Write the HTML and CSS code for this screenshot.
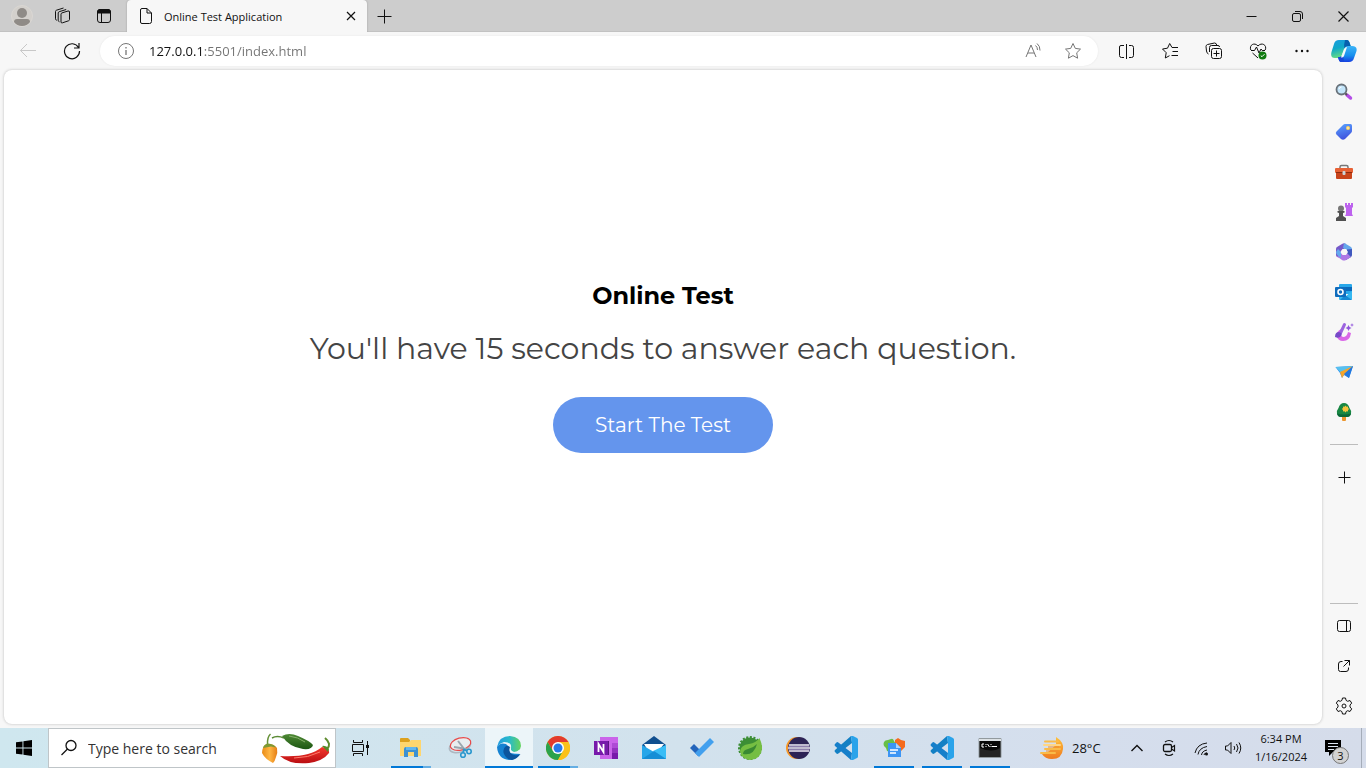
FILE: index.html
```html
<!DOCTYPE html>
<html lang="en">
<head>
<meta charset="utf-8">
<meta name="viewport" content="width=device-width, initial-scale=1">
<title>Online Test Application</title>
<link rel="stylesheet" href="styles.css">
</head>
<body>
<div class="desktop">
  <header class="tabstrip">
    <div class="tabstrip-tools">
      <button class="tool" aria-label="Profile"><svg width="22" height="22" viewBox="0 0 22 22"><circle cx="11" cy="11" r="10.500" fill="#d3d0cc" stroke="#dad7d3"/><circle cx="11" cy="8" r="5" fill="#8f8b87"/><path d="M3 17q0-3 3-3h10q3 0 3 3-3 4-8 4t-8-4z" fill="#8f8b87"/></svg></button>
      <button class="tool" aria-label="Workspaces"><svg class="line" width="18" height="18" viewBox="0 0 18 18"><path d="M7 7.200q0-1 1-1.300l6-1.900q1.500-.4 1.500 1v7.500q0 1-1 1.300l-6 2Q7 16.300 7 15zM5.500 14.800q-1.300-.3-1.300-1.500V6q0-1 1-1.300l7-2.200M2.800 13.300Q1.500 13 1.500 11.800V4.500q0-1 1-1.300L9.500 1"/></svg></button>
      <button class="tool" aria-label="Tab actions"><svg class="line" width="16" height="16" viewBox="0 0 16 16"><rect x="1.500" y="1.500" width="13" height="13" rx="2.500"/><path d="M1.500 5V4q0-2.500 2.500-2.500h8q2.500 0 2.500 2.500v1z" fill="#111"/><path d="M5.500 5v9"/></svg></button>
    </div>
    <div class="tab">
      <svg class="line" width="14" height="18" viewBox="0 0 14 18"><path d="M3 1.500h5l4.500 4.500v8.500q0 2-2 2H3q-1.500 0-1.500-1.500V3q0-1.500 1.500-1.500zM8 1.500V6h4.500"/></svg>
      <span class="tab-title">Online Test Application</span>
      <button class="tab-close" aria-label="Close tab"><svg class="line" width="10" height="10" viewBox="0 0 10 10"><path d="M1 1l8 8M9 1L1 9" stroke-width="1.200"/></svg></button>
    </div>
    <button class="new-tab" aria-label="New tab"><svg class="line" width="15" height="15" viewBox="0 0 15 15"><path d="M7.500 .5v14M.5 7.500h14"/></svg></button>
    <div class="window-controls">
      <button aria-label="Minimize"><svg class="line" width="11" height="11" viewBox="0 0 11 11"><path d="M.5 5.500h10"/></svg></button>
      <button aria-label="Restore"><svg class="line" width="11" height="11" viewBox="0 0 11 11"><rect x=".5" y="2.500" width="8" height="8" rx="1.500"/><path d="M3 .5h5q2.500 0 2.500 2.500v5"/></svg></button>
      <button aria-label="Close"><svg class="line" width="11" height="11" viewBox="0 0 11 11"><path d="M.5.5l10 10M10.500.5l-10 10" stroke-width="1.200"/></svg></button>
    </div>
  </header>

  <div class="browser">
    <div class="browser-main">
      <nav class="toolbar">
        <div class="nav-buttons">
          <button class="tool" aria-label="Back" disabled><svg class="line faded" width="18" height="16" viewBox="0 0 18 16"><path d="M17 7.500H1.500M8 1L1.500 7.500 8 14"/></svg></button>
          <button class="tool" aria-label="Refresh"><svg class="line refresh" width="18" height="18" viewBox="0 0 18 18"><path d="M15.500 5.500A7.500 7.500 0 1 0 16.500 9M16 1v5h-5"/></svg></button>
        </div>
        <div class="address">
          <button class="address-info" aria-label="View site information"><svg class="line gray" width="18" height="18" viewBox="0 0 18 18"><circle cx="9" cy="9" r="7.500"/><path d="M9 8v5M9 5v1.500" stroke-width="1.300"/></svg></button>
          <input class="url" type="text" aria-label="Address" value="127.0.0.1:5501/index.html">
          <button class="tool" aria-label="Read aloud"><svg class="line gray" width="18" height="18" viewBox="0 0 18 18"><path d="M2 15L7 3l5 12M4 11h6M11.500 3.500q2 1.500 2 4.500M13 1.500q3.200 2.500 3 7"/></svg></button>
          <button class="tool" aria-label="Add to favorites"><svg class="line gray" width="18" height="18" viewBox="0 0 18 18"><path d="M9 1.500l2.300 4.900 5.200.7-3.800 3.700.9 5.400L9 13.600l-4.600 2.600.9-5.400L1.500 7.100l5.200-.7z"/></svg></button>
        </div>
        <div class="toolbar-actions">
          <button class="tool" aria-label="Split screen"><svg class="line" width="17" height="17" viewBox="0 0 17 17"><path d="M6 2.500H3Q1.500 2.500 1.500 4v8.500q0 2 2 2H6M11 2.500h2.500Q15.500 2.500 15.500 4.500v8q0 2-2 2H11M8.500 1v15"/></svg></button>
          <button class="tool" aria-label="Favorites"><svg class="line" width="18" height="18" viewBox="0 0 18 18"><path d="M11 5.500L8.700 1.500 6.500 6.200l-5 .8 3.700 3.700-.9 5.300 4.200-2.300M11 5.500h6M11.500 9.500h5.500M10.500 13.500h6.500"/></svg></button>
          <button class="tool" aria-label="Collections"><svg class="line" width="18" height="18" viewBox="0 0 18 18"><rect x="6.500" y="6.500" width="10" height="10" rx="2"/><path d="M11.500 8.500v6M8.500 11.500h6M3.500 12Q1.500 11 1.500 9L1 4.500Q1 3 2.500 2.500L9.500 1q2 0 2.300 2.300M4.500 10V5.500q0-2 2-2H13q1.500 0 1.500 1.500"/></svg></button>
          <button class="tool" aria-label="Browser essentials"><svg class="line" width="18" height="18" viewBox="0 0 18 18"><path d="M1.800 8C-.2 3 5.500-.2 9 4c3.500-4.200 9.500-1 7.200 4M2 8.500h3.500L7.500 5l2.500 6 2-4 1.200 1.500H16M3.500 11L9 16"/><circle cx="13.500" cy="13.500" r="4" fill="#107c10" stroke="none"/><path d="M11.800 13.700l1.200 1 2.500-2.500" stroke="#fff"/></svg></button>
          <button class="tool" aria-label="Settings and more"><svg width="18" height="18" viewBox="0 0 18 18" fill="#111"><circle cx="3.500" cy="9" r="1.200"/><circle cx="9" cy="9" r="1.200"/><circle cx="14.500" cy="9" r="1.200"/></svg></button>
        </div>
      </nav>
      <main class="page">
        <h1 class="page-title">Online Test</h1>
        <p class="page-text">You'll have 15 seconds to answer each question.</p>
        <button class="start-test">Start The Test</button>
      </main>
    </div>

    <aside class="sidebar">
      <button class="side" aria-label="Copilot"><svg width="26" height="26" viewBox="0 0 26 26"><defs><linearGradient id="cp1" x2=".3" y2="1"><stop stop-color="#199be0"/><stop offset=".5" stop-color="#10a8c8"/><stop offset="1" stop-color="#66dd83"/></linearGradient><linearGradient id="cp2" x2="0" y2="1"><stop stop-color="#3db5f8"/><stop offset=".6" stop-color="#168eed"/><stop offset="1" stop-color="#173fe2"/></linearGradient></defs><path d="M8 1h8q2 0 3 4l1 3h-4q-2 0-3 3l-2 5q-1 3-3 3H4q-5 0-3.500-6L3 5q1-4 5-4z" fill="url(#cp1)"/><path d="M14 1h2q2 0 3 4l1 3h-4q-1.500 0-2.500 2-1-4 .5-9z" fill="#075fae"/><path d="M17 7h4q5.500 0 4.500 5L23 19q-1 4-5 4h-8q-2 0-3-5h2q2 0 3-3l2-6q.5-2 3-2z" fill="url(#cp2)"/><path d="M7 18h2q2 0 3-3l1 8h-3q-2 0-3-5z" fill="#1747d8"/><path d="M13 10q1-2 3-2l-3 9q-1 2-3 1.500z" fill="#f3fbfa"/></svg></button>
      <button class="side" aria-label="Search"><svg width="18" height="18" viewBox="0 0 18 18"><path d="M12 12l3.500 3" stroke="#b44de7" stroke-width="3.500" stroke-linecap="round"/><path d="M10 10l2 2" stroke="#555" stroke-width="2"/><circle cx="6.500" cy="6.500" r="5" fill="#c3e5fa" stroke="#69727a" stroke-width="1.800"/><path d="M4 6q.5-2 2.500-2" stroke="#fff" fill="none"/></svg></button>
      <button class="side" aria-label="Shopping"><svg width="18" height="18" viewBox="0 0 18 18"><defs><linearGradient id="tag" x2=".3" y2="1"><stop stop-color="#5ba5ff"/><stop offset="1" stop-color="#4055df"/></linearGradient></defs><path d="M10 1h5.500Q17 1 17 2.500V8q0 1-1 2l-6 6q-2 1.500-4 0l-4.500-4.500q-1.500-1.500 0-3L8 2q1-1 2-1z" fill="url(#tag)"/><circle cx="13" cy="5" r="2" fill="#ffd45b"/><circle cx="13" cy="5" r=".7" fill="#fff"/></svg></button>
      <button class="side" aria-label="Tools"><svg width="18" height="18" viewBox="0 0 18 18"><path d="M5 6V4q0-1.500 1.500-1.500h5Q13 2.500 13 4v2" fill="none" stroke="#777" stroke-width="1.500"/><rect y="5" width="18" height="5" rx="1" fill="#e76135"/><path d="M1 9h16v6q0 1-1 1H2q-1 0-1-1z" fill="#c8441b"/><path d="M1 9h16v1H1z" fill="#8d2b0c"/><rect x="7.500" y="8" width="3" height="4" rx="1" fill="#ccd4d9"/></svg></button>
      <button class="side" aria-label="Games"><svg width="18" height="18" viewBox="0 0 18 18"><path d="M10 0h2v2h1V0h2v2h1V0h2v4l-1 1v6l1 2h-8l1-2V5l-1-1z" fill="#bd62ee"/><circle cx="6" cy="5.500" r="3" fill="#777"/><path d="M2.500 8h7v1.500L8 10v3l3 2v3H1v-3l3-2v-3l-1.500-.5z" fill="#505050"/></svg></button>
      <button class="side" aria-label="Microsoft 365"><svg width="18" height="18" viewBox="0 0 18 18"><path d="M7 1L2 4Q1 4.600 1 6v6q0 1 1 2l4 1V8l5-3.500V1Q9-.5 7 1z" fill="#7659c9"/><path d="M9 .3q1 0 2 .6l5 3q1 .8 1 2.100v4l-6-3.500L8 5z" fill="#65a7ec"/><path d="M17 6v6q0 1-1 2l-5 3-2-4 3-3V6.500z" fill="#3f58be"/><path d="M1.500 13l5.500 4q2 1 4 0l5-3-4-4-3 2-3-2v3.500z" fill="#ad78e5"/><path d="M1 9q0 3 5 6V9L3 6z" fill="#63a8ed"/><path d="M7.500 6h3.500l2 3-2 3H7.500L5.500 9z" fill="#f7f7f7"/></svg></button>
      <button class="side" aria-label="Outlook"><svg width="18" height="18" viewBox="0 0 18 18"><path d="M5 1h11q1 0 1 1v9H4V2q0-1 1-1z" fill="#28a8ea"/><path d="M4 4h13v4H4z" fill="#0a6abc"/><path d="M4 9l7 4 6-5v8q0 1-1 1H5q-1 0-1-1z" fill="#35b8f1"/><path d="M10 12l7 5H5z" fill="#1689d4"/><rect y="4" width="11" height="10" rx="1" fill="#0f6cbd"/><circle cx="5.500" cy="9" r="2.500" fill="none" stroke="#fff" stroke-width="1.600"/></svg></button>
      <button class="side" aria-label="Designer"><svg width="20" height="20" viewBox="0 0 20 20"><path d="M7 7q-5 3-4.500 7Q4 19 9 19q7 0 8-8l-3-1q-1 5-5 5-3-1-2-8z" fill="#da67e8"/><path d="M10.500 2.500L6.500 11" stroke="#9c64df" stroke-width="3" stroke-linecap="round"/><path d="M1 15q0-5 4-5 4 1 2 4-2 3-6 1z" fill="#774ac8"/><path d="M14.500 3l1 2 2 1-2 1-1 2-1-2-2-1 2-1zM18 1l.5 1.500L20 3l-1.500.5L18 5l-.5-1.500L16 3l1.500-.5z" fill="#9154dc"/></svg></button>
      <button class="side" aria-label="Drop"><svg width="18" height="18" viewBox="0 0 18 18"><path d="M.5 4L18 3l-4 12-5-3-2 3-2-5z" fill="#2a8dee"/><path d="M.5 4L18 3 6 10z" fill="#57c1ef"/><path d="M5 9l13-6-9 9-2 3z" fill="#f5a52b"/><path d="M9 11l9-8-4 12z" fill="#2277de"/></svg></button>
      <button class="side" aria-label="Tree"><svg width="18" height="18" viewBox="0 0 18 18"><rect x="7" y="12" width="4" height="6" rx="1" fill="#ec962e"/><path d="M9 0q4 0 5.500 5Q17 8 16 11q-1 3-4 3H6q-3 0-4-3-1-3 1.500-6Q5 0 9 0z" fill="#188743"/><path d="M2 10.500q7 2 14 0-1 3.500-4 3.500H6q-3 0-4-3.500z" fill="#0b6839"/><path d="M10.500 2.500l1 1.200 1.500-.2v1.500l1.200 1-1.200 1v1.500l-1.500-.2-1 1.200-1-1.200-1.500.2V7L6.800 6 8 5V3.500l1.500.2z" fill="#f5c33b"/></svg></button>
      <hr class="side-rule">
      <button class="side" aria-label="Customize"><svg class="line" width="13" height="13" viewBox="0 0 13 13"><path d="M6.500.5v12M.5 6.500h12"/></svg></button>
      <div class="side-bottom">
        <hr class="side-rule">
        <button class="side" aria-label="Hide sidebar"><svg class="line" width="16" height="16" viewBox="0 0 16 16"><rect x="1.500" y="2.500" width="13" height="11" rx="2"/><path d="M10.500 2.500v11"/></svg></button>
        <button class="side" aria-label="Open in new window"><svg class="line" width="16" height="16" viewBox="0 0 16 16"><path d="M6.500 3.500H5q-2.500 0-2.500 2.500v5.500q0 2 2 2H10q2.500 0 2.500-2.500V9.500M8.500 2.500h5v5M13.500 2.500l-6 6"/></svg></button>
        <button class="side" aria-label="Settings"><svg class="line" width="18" height="18" viewBox="0 0 18 18"><path d="M7.500 1h3l.6 2.400 1.600.9L15 3.500l1.700 2.600L15 8v2l1.700 1.900-1.700 2.600-2.300-.8-1.600.9-.6 2.400h-3l-.6-2.400-1.600-.9-2.300.8-1.700-2.600L3 10V8L1.300 6.100 3 3.500l2.300.8 1.600-.9z" stroke-linejoin="round"/><circle cx="9" cy="9" r="2"/></svg></button>
      </div>
    </aside>
  </div>

  <footer class="taskbar">
    <button class="task" aria-label="Start"><svg width="16" height="16" viewBox="0 0 16 16" fill="#000"><path d="M0 2.300l6.500-.9v6.100H0zM7.400 1.300L16 0v7.500H7.400zM0 8.400h6.500v6.200L0 13.700zM7.400 8.400H16V16l-8.600-1.300z"/></svg></button>
    <label class="search">
      <svg class="line" width="18" height="18" viewBox="0 0 18 18"><circle cx="11" cy="6.500" r="5" stroke-width="1.300"/><path d="M7.500 10l-6 6" stroke-width="1.300"/></svg>
      <input type="text" aria-label="Search" placeholder="Type here to search">
      <svg width="70" height="36" viewBox="0 0 70 36"><defs><linearGradient id="red" x2="0" y2="1"><stop stop-color="#f5382c"/><stop offset="1" stop-color="#b90d12"/></linearGradient><linearGradient id="green" x2="0" y2="1"><stop stop-color="#4f8a35"/><stop offset="1" stop-color="#1c5612"/></linearGradient><linearGradient id="orange"><stop stop-color="#e98b16"/><stop offset=".5" stop-color="#ffb644"/><stop offset="1" stop-color="#e57d14"/></linearGradient></defs><path d="M5.500 15Q5 7 8.500 4" fill="none" stroke="#679238" stroke-width="1.500"/><path d="M1 18q1-4 6-4t8 4q1 5-1 9-1 4-3 6Q3 29 0 23q0-3 1-5z" fill="url(#orange)"/><path d="M1 18q1-4 5-4.500 6 .5 8 4l-5-1z" fill="#7c9a35"/><path d="M65 19q5-5-2-11" fill="none" stroke="#5d8b2d" stroke-width="2"/><path d="M18 26q17 1 28-2 8-2 14-7 8 1 7 6-6 8-20 10-19 2-29-7z" fill="url(#red)"/><path d="M32 28q14 0 26-6" fill="none" stroke="#ff7a6a" stroke-width="1"/><path d="M60 16q4-1 7 3l-1 3-3-3z" fill="#558a27"/><path d="M10 8q5-3 12 0" fill="none" stroke="#5b8b35" stroke-width="1.500"/><path d="M20 6q7-4 16 0 12 5 15 9-1 5-10 4-14-2-21-13z" fill="url(#green)"/><path d="M27 6q9 1 16 6" fill="none" stroke="#86b06a" stroke-width="1"/></svg>
    </label>
    <button class="task" aria-label="Task view"><svg class="line" width="18" height="18" viewBox="0 0 18 18"><path d="M2.500 1v2.500h9V1M2.500 17v-2.500h9V17M1.500 5.500h11v7h-11zM16.500 2v14"/><path d="M15 6h3v3h-3z" fill="#111" stroke="none"/></svg></button>
    <div class="apps">
      <button class="task running grouped" aria-label="File Explorer"><svg width="24" height="24" viewBox="0 0 24 24"><path d="M1 3q0-1 1-1h7l2 2v4H1z" fill="#dda11d"/><path d="M1 6h9l2-2h10v16H1z" fill="#ffd66e"/><path d="M5 13q0-2 2-2h10q2 0 2 2v8h-4v-5H9v5H5z" fill="#3d91d2"/><path d="M7 11h10v3H7z" fill="#63b6ec"/></svg></button>
      <button class="task" aria-label="Snipping Tool"><svg width="24" height="24" viewBox="0 0 24 24" fill="none"><ellipse cx="12" cy="10" rx="11" ry="6" transform="rotate(-18 12 10)" stroke="#aeb8c1" stroke-width="1.500"/><ellipse cx="12.500" cy="8" rx="10.500" ry="6" transform="rotate(-15 12.500 8)" stroke="#e84a4a" stroke-width="1.200" fill="#e9edef"/><path d="M10 5l7 9M6 11l13 2" stroke="#9ba6ae" stroke-width="2"/><circle cx="15" cy="19" r="2.300" stroke="#2997ce" stroke-width="1.600"/><circle cx="21" cy="15.500" r="2.200" stroke="#2997ce" stroke-width="1.600"/><path d="M15 16.500l1-3 3 1.500" stroke="#2997ce" stroke-width="1.800"/></svg></button>
      <button class="task running active" aria-label="Microsoft Edge"><svg width="26" height="26" viewBox="0 0 26 26"><defs><linearGradient id="edge" x2="1"><stop stop-color="#239be0"/><stop offset=".5" stop-color="#28b9cb"/><stop offset="1" stop-color="#65d45e"/></linearGradient></defs><path d="M1 12q3-5 9-3l4 4-2 5 12 1q-4 6-11 6Q2 24 1 12z" fill="#1683d2"/><path d="M1 12Q3 1 14 1q11 1 11 10-1 6-7 6-4-1-3-4 1-6-7-6-4 1-7 5z" fill="url(#edge)"/><path d="M10 11q-4 3-2 8 3 6 8 6 5-1 8.500-6-6 3-10-1-2-3 0-5-2-3-4.500-2z" fill="#0c559d"/><path d="M14 12q-2 4 3 6 4 1 7-1h2v-3l-3 1q-2 2-5 2-4-1-3-4z" fill="#ecf5f9"/></svg></button>
      <button class="task running grouped" aria-label="Google Chrome"><svg width="24" height="24" viewBox="0 0 24 24"><circle cx="12" cy="12" r="12" fill="#fbc11a"/><path d="M1.600 6A12 12 0 0 1 22.400 6H12L7 15z" fill="#e33b2e"/><path d="M1.600 6A12 12 0 0 0 12 24l5.200-9H7z" fill="#2ba24c"/><path d="M17 15l-5 9A12 12 0 0 0 22.400 6H12z" fill="#fbc11a"/><circle cx="12" cy="12" r="6" fill="#fff"/><circle cx="12" cy="12" r="4.500" fill="#2879ea"/></svg></button>
    </div>
    <div class="apps-more">
      <button class="task" aria-label="OneNote"><svg width="24" height="24" viewBox="0 0 24 24"><path d="M6 1h18v22H6z" fill="#ca64ea"/><path d="M18 7h6v5h-6z" fill="#ae4bd5"/><path d="M18 12h6v5h-6z" fill="#9332bf"/><path d="M18 17h6v6h-6z" fill="#7719aa"/><path d="M6 5h9v14H6z" fill="#5b1681"/><path d="M0 5h14v14H0z" fill="#7719aa"/><path d="M4.500 16V8l5 8V8" fill="none" stroke="#fff" stroke-width="1.800"/></svg></button>
      <button class="task" aria-label="Mail"><svg width="24" height="24" viewBox="0 0 24 24"><path d="M0 9L12 0l12 9v14H0z" fill="#104f8f"/><path d="M2 8h20l-4 5-6 4-7-4z" fill="#fff"/><path d="M0 9l12 7 12-7v14H0z" fill="#27a6e9"/><path d="M24 9v14L11 15z" fill="#39bdf6"/><path d="M0 23l12-8 12 8z" fill="#168ed6"/></svg></button>
      <button class="task" aria-label="To Do"><svg width="24" height="24" viewBox="0 0 24 24"><path d="M0 12l4-4 7 7-3 5z" fill="#2364bb"/><path d="M5 17L20 2l4 4L9 21z" fill="#42a0ee"/></svg></button>
      <button class="task" aria-label="Spring Tools"><svg width="24" height="24" viewBox="0 0 24 24"><circle cx="12" cy="12" r="10.500" fill="#3c8e35" stroke="#3c8e35" stroke-width="3" stroke-dasharray="2 1.500"/><path d="M21.500 2q3 7 2.500 11-1 10-12 11-9-1-10-9 1-6 9-7 7-1 10.500-6z" fill="#75be42"/><path d="M5 18q11 2 14-10-4 4-9 5-5 1-5 5z" fill="#398a32"/></svg></button>
      <button class="task" aria-label="Eclipse"><svg width="26" height="24" viewBox="0 0 26 24"><circle cx="12" cy="12" r="11" fill="#f79727"/><circle cx="14" cy="12" r="11" fill="#2d2355"/><path d="M4 9h20M3 12h22M4 15h20" stroke="#f1edf7" stroke-width="1.700"/><path d="M3.500 10.500h21M3.500 13.500h21" stroke="#8d7eac"/></svg></button>
      <button class="task" aria-label="Visual Studio Code"><svg width="24" height="24" viewBox="0 0 24 24"><path d="M17 0L1 14q-1 1 0 2l2 2q1 0 2-1L18 7z" fill="#1380c4"/><path d="M18 17L5 7Q4 6 3 6L1 8q-1 1 0 2l16 14z" fill="#167fca"/><path d="M17 0q1-.3 2 0l4 2q1 .5 1 1.500v17q0 1-1 1.500l-4 2q-1 .3-2 0l1-7V7z" fill="#2aa3ea"/></svg></button>
      <button class="task running" aria-label="Documents"><svg width="24" height="24" viewBox="0 0 24 24"><path d="M2 6q1-2 4-2l3-1q2-1 3 2l3 5-7 6-3-1-1-3-2-2q-1-2 0-4z" fill="#67bf47"/><path d="M13 4l3-2 3 2 4 1v6l-5 5-5-6z" fill="#f56b1d"/><path d="M6 7h8l5 5v9H6z" fill="#3c95f4"/><path d="M14 7l5 5h-5z" fill="#a9d4ff"/><path d="M8 14h8M8 17h6" stroke="#fff" stroke-width="1.500"/></svg></button>
      <button class="task running" aria-label="Visual Studio Code, open"><svg width="24" height="24" viewBox="0 0 24 24"><path d="M17 0L1 14q-1 1 0 2l2 2q1 0 2-1L18 7z" fill="#1380c4"/><path d="M18 17L5 7Q4 6 3 6L1 8q-1 1 0 2l16 14z" fill="#167fca"/><path d="M17 0q1-.3 2 0l4 2q1 .5 1 1.500v17q0 1-1 1.500l-4 2q-1 .3-2 0l1-7V7z" fill="#2aa3ea"/></svg></button>
      <button class="task running" aria-label="Command Prompt"><svg width="24" height="20" viewBox="0 0 24 20"><path d="M1 .5h22v19H1z" fill="#080808" stroke="#929a9e"/><path d="M1 1h22v2H1z" fill="#dce1e4"/><path d="M6 6H4v3h2M8 6v1M8 8v1M9.500 6l2 3M13 6v1M13 8v1M14 8.500h5" fill="none" stroke="#fff"/><path d="M2 10q12 5 20 0v9H2z" fill="#242424"/></svg></button>
    </div>
    <div class="tray">
      <button class="weather"><svg width="24" height="24" viewBox="0 0 24 24"><defs><linearGradient id="sun" x2="0" y2="1"><stop stop-color="#ffc13b"/><stop offset="1" stop-color="#ef7a20"/></linearGradient></defs><path d="M16 1q8 5 7 12-1 10-11 10-7 0-10-5l6-2 8-7z" fill="url(#sun)"/><path d="M5 5.500h13M5 13h15M1 17h14" stroke="#f9bb49" stroke-width="2" stroke-linecap="round"/><path d="M4 9h16" stroke="#ffd684" stroke-width="2" stroke-linecap="round"/><path d="M8 11h11M6 15h12" stroke="#ef9130"/></svg><span>28°C</span></button>
      <button class="tray-icon" aria-label="Show hidden icons"><svg class="line" width="14" height="8" viewBox="0 0 14 8"><path d="M1.500 7L7 1.500 12.500 7" stroke-width="1.400"/></svg></button>
      <button class="tray-icon" aria-label="Meet Now"><svg class="line" width="16" height="18" viewBox="0 0 16 18"><rect x="2.500" y="5.500" width="8" height="7" rx="1.500" stroke-width="1.300"/><path d="M10.500 8.500l3-2v5.500l-3-2M4 3q4-3 8 0M4 15q4 3 8 0" stroke-width="1.200"/></svg></button>
      <button class="tray-icon" aria-label="Network"><svg class="line" width="16" height="16" viewBox="0 0 16 16"><path d="M2 13Q4 4 14 3M5 14.500Q6 8 14 6.500M8.500 15q.5-4 5.500-5M11 15q0-2 3-2"/><circle cx="13.500" cy="14" r="1.500" fill="#111" stroke="none"/></svg></button>
      <button class="tray-icon" aria-label="Volume"><svg class="line" width="18" height="16" viewBox="0 0 18 16"><path d="M1.500 6h2L7 2.500v11L3.500 10h-2zM10 6q1.500 2 0 4M12.500 4q3 4 0 8M15 2.500q3.500 5.500 0 11"/></svg></button>
      <button class="clock"><span>6:34 PM</span><span>1/16/2024</span></button>
      <button class="notifications" aria-label="3 new notifications"><svg width="16" height="16" viewBox="0 0 16 16"><path d="M0 0h16v12h-8l-4 4v-4H0z"/><path d="M3 3.500h10M3 6.500h10M3 9.500h6" stroke="#dce4f0"/></svg><span class="badge">3</span></button>
      <button class="show-desktop" aria-label="Show desktop"></button>
    </div>
  </footer>
</div>
</body>
</html>
```
FILE: styles.css
```css
* { box-sizing: border-box; }

body {
  margin: 0;
  font-family: "Segoe UI", "Open Sans", "Noto Sans", sans-serif;
  font-size: 12px;
  color: #111;
}

button {
  display: flex;
  align-items: center;
  justify-content: center;
  padding: 0;
  border: 0;
  background: none;
  color: inherit;
  font: inherit;
}

svg { display: block; flex: none; }

.line { fill: none; stroke: #111; stroke-width: 1; }
.line.gray { stroke: #767676; }
.line.faded { stroke: #c8c8c8; }
.line.refresh { stroke-width: 1.2; }

.desktop {
  display: flex;
  flex-direction: column;
  min-height: 100vh;
  background: #f7f7f7;
}

/* Tab strip */
.tabstrip {
  display: flex;
  height: 32px;
  background: #cdcdcd;
  box-shadow: inset 0 -1px #c2c2c2;
}

.tabstrip-tools { display: flex; gap: 1px; padding: 0 3px 0 2px; }
.tool { width: 40px; flex: none; }

.tab {
  display: flex;
  align-items: center;
  width: 240px;
  padding: 0 8px 0 12px;
  gap: 11px;
  background: #f7f7f7;
  border-radius: 4px 4px 0 0;
  box-shadow: 0 0 2px #999;
  clip-path: inset(0 -2px 0 -2px);
}

.tab-title { flex: 1; font-size: 11px; white-space: nowrap; }
.tab-close { width: 16px; height: 16px; }
.new-tab { width: 35px; }
.window-controls { display: flex; margin-left: auto; }
.window-controls button { width: 46px; }

/* Browser */
.browser { display: flex; flex: 1; }
.browser-main { display: flex; flex: 1; flex-direction: column; min-width: 0; }

.toolbar {
  display: flex;
  align-items: stretch;
  gap: 8px;
  height: 38px;
  padding: 4px 0 4px 8px;
}

.nav-buttons, .toolbar-actions { display: flex; gap: 4px; }

.address {
  display: flex;
  flex: 1;
  padding: 0 5px 0 12px;
  background: #fff;
  border-radius: 15px;
  box-shadow: 0 0 2px #e4e4e4;
}

.address-info { width: 28px; }

.url {
  flex: 1;
  min-width: 0;
  margin-left: 9px;
  padding: 0;
  border: 0;
  outline: 0;
  font: inherit;
  font-size: 13px;
  color: #555;
  background: linear-gradient(90deg, #111 54px, #737373 54px);
  background-clip: text;
  -webkit-background-clip: text;
  -webkit-text-fill-color: transparent;
}

.page {
  display: flex;
  flex: 1;
  flex-direction: column;
  align-items: center;
  justify-content: center;
  margin: 0 0 4px 4px;
  padding-bottom: 60px;
  background: #fff;
  border-radius: 8px;
  box-shadow: 0 0 3px #bbb;
  font-family: Montserrat, Inter, sans-serif;
}

.page-title {
  margin: 0 0 20px;
  color: #000;
  font-size: 24px;
  font-weight: 700;
  line-height: 30px;
}

.page-text {
  margin: 0 0 30px;
  color: #444;
  font-size: 30px;
  font-weight: 400;
  line-height: 36px;
}

.start-test {
  width: 220px;
  height: 56px;
  border-radius: 28px;
  background: #6495ed;
  color: #fff;
  font-size: 20px;
}

/* Sidebar */
.sidebar { display: flex; flex-direction: column; width: 44px; }
.side { width: 44px; height: 40px; }
.side-rule { width: 28px; margin: 12px 8px; border: 0; border-top: 1px solid #bdbdbd; }
.side-bottom { margin-top: auto; padding-bottom: 2px; }
.side-bottom .side-rule { margin: 0 8px 2px; }

/* Taskbar */
.taskbar {
  display: flex;
  height: 40px;
  background: linear-gradient(90deg, #cfe7ef, #d2e2ed 50%, #d5deed 80%, #d5dcea);
}

.task { width: 48px; flex: none; }

.search {
  display: flex;
  align-items: center;
  flex: none;
  width: 288px;
  padding: 0 3px 0 11px;
  border: 1px solid #bfc5c8;
  background: #fff;
}

.search input {
  flex: 1;
  min-width: 0;
  margin-left: 10px;
  padding: 0;
  border: 0;
  outline: 0;
  background: none;
  font: inherit;
  font-size: 14px;
}

.search input::placeholder { color: #333; opacity: 1; }

.apps { display: flex; gap: 1px; margin-left: 3px; }
.apps-more { display: flex; }

.running {
  background: linear-gradient(#0078d7, #0078d7) center bottom / 40px 2px no-repeat;
}

.running.grouped {
  background: linear-gradient(90deg, #0078d7 32px, #65aee3 32px) center bottom / 40px 2px no-repeat;
}

.running.active {
  background: linear-gradient(#0078d7, #0078d7) center bottom / 48px 2px no-repeat, #ecf5f9;
}

.tray { display: flex; margin-left: auto; }
.weather { justify-content: flex-start; width: 88px; padding-left: 7px; gap: 8px; font-size: 13px; }
.tray-icon { width: 32px; }
.clock { flex-direction: column; width: 64px; font-size: 11px; line-height: 18px; }

.notifications { position: relative; width: 40px; margin-right: 8px; }

.badge {
  position: absolute;
  right: 4px;
  bottom: 4px;
  width: 17px;
  height: 17px;
  border: 1px solid #777;
  border-radius: 50%;
  background: #d2d2d2;
  font-size: 11px;
  line-height: 15px;
}

.show-desktop { width: 5px; border-left: 1px solid #a5adb9; }
```
